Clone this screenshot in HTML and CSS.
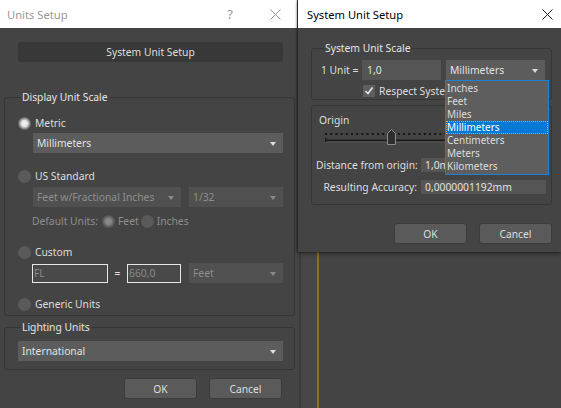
FILE: index.html
```html
<!DOCTYPE html>
<html lang="en">
  <head>
    <meta charset="UTF-8" />
    <meta name="viewport" content="width=device-width, initial-scale=1.0" />
    <title>Units Setup</title>
    <link rel="stylesheet" href="styles.css">
  </head>

  <body>
    <div class="escritorio">
      <div class="viewport">
        <div class="vp-borde"></div>
        <div class="vp-linea"></div>
      </div>

      <!-- Units Setup (ventana de atras) -->
      <section class="ventana ventana-units">
        <header class="barra inactiva">
          <span class="titulo">Units Setup</span>
          <span class="ayuda">?</span>
          <svg class="cerrar" width="11" height="11" viewBox="0 0 11 11"><path d="M0.5 0.5 L10.5 10.5 M10.5 0.5 L0.5 10.5" /></svg>
        </header>
        <div class="cuerpo cuerpo-units">
          <button class="boton-oscuro">System Unit Setup</button>

          <fieldset class="grupo grupo-display">
            <legend>Display Unit Scale</legend>
            <div class="fila-radio fila-metric"><span class="radio marcado"></span>Metric</div>
            <div class="combo sangria">Millimeters<span class="flecha"></span></div>

            <div class="fila-radio fila-us"><span class="radio"></span>US Standard</div>
            <div class="sangria fila-combos">
              <div class="combo off combo-feet">Feet w/Fractional Inches<span class="flecha"></span></div>
              <div class="combo off combo-frac">1/32<span class="flecha"></span></div>
            </div>
            <div class="fila-default">
              <span class="txt-default">Default Units:</span>
              <span class="radio mini-marcado"></span><span class="txt-off">Feet</span>
              <span class="radio radio-inches"></span><span class="txt-off">Inches</span>
            </div>

            <div class="fila-radio fila-custom"><span class="radio"></span>Custom</div>
            <div class="sangria fila-custom-campos">
              <div class="campo-blanco campo-fl">FL</div>
              <span class="igual">=</span>
              <div class="campo-blanco campo-num">660,0</div>
              <div class="combo off combo-pies">Feet<span class="flecha"></span></div>
            </div>

            <div class="fila-radio fila-generic"><span class="radio"></span>Generic Units</div>
          </fieldset>

          <fieldset class="grupo grupo-lighting">
            <legend>Lighting Units</legend>
            <div class="combo combo-intl">International<span class="flecha"></span></div>
          </fieldset>

          <div class="botones">
            <button class="boton">OK</button>
            <button class="boton">Cancel</button>
          </div>
        </div>
      </section>

      <!-- System Unit Setup (ventana activa) -->
      <section class="ventana ventana-system">
        <header class="barra">
          <span class="titulo">System Unit Setup</span>
          <svg class="cerrar" width="11" height="11" viewBox="0 0 11 11"><path d="M0.5 0.5 L10.5 10.5 M10.5 0.5 L0.5 10.5" /></svg>
        </header>
        <div class="cuerpo cuerpo-system">
          <fieldset class="grupo grupo-escala">
            <legend>System Unit Scale</legend>
            <div class="fila-unidad">
              <span class="etiqueta-unidad">1 Unit =</span>
              <div class="campo campo-valor">1,0</div>
              <div class="combo combo-mm">Millimeters<span class="flecha"></span></div>
            </div>
            <div class="fila-check">
              <span class="check">
                <svg width="12" height="12" viewBox="0 0 12 12"><path d="M2.5 6 L5 8.5 L9.5 2.5" /></svg>
              </span>
              <span class="txt-check">Respect System Units in Files</span>
            </div>
          </fieldset>

          <div class="caja-origen">
            <div class="etiqueta-origen">Origin</div>
            <svg class="deslizador" width="222" height="18" viewBox="0 0 222 18">
              <line class="puntos" x1="0" y1="5" x2="222" y2="5" />
              <line class="pista" x1="0" y1="11.5" x2="222" y2="11.5" />
              <line class="pista-luz" x1="0" y1="13" x2="222" y2="13" />
              <line class="pista" x1="0.5" y1="9" x2="0.5" y2="13" />
              <polygon class="pulgar" points="66.5,0.5 70.5,4.5 70.5,15.5 62.5,15.5 62.5,4.5" />
            </svg>
            <div class="fila-dato fila-distancia">
              <span class="etiqueta-dato">Distance from origin:</span>
              <div class="campo campo-dato">1,0mm</div>
            </div>
            <div class="fila-dato fila-precision">
              <span class="etiqueta-dato">Resulting Accuracy:</span>
              <div class="campo campo-dato">0,0000001192mm</div>
            </div>
          </div>

          <div class="botones botones-system">
            <button class="boton">OK</button>
            <button class="boton">Cancel</button>
          </div>

          <!-- lista abierta del combo de unidades, tapa lo de abajo -->
          <ul class="lista">
            <li>Inches</li>
            <li>Feet</li>
            <li>Miles</li>
            <li class="activo">Millimeters</li>
            <li>Centimeters</li>
            <li>Meters</li>
            <li>Kilometers</li>
          </ul>
        </div>
      </section>
    </div>
  </body>
</html>
```

FILE: styles.css
```css
body {
  margin: 0;
  background-color: #444444;
  font-family: "Noto Sans", "Open Sans", sans-serif;
  font-size: 10.3px;
  color: #dedede;
}

.escritorio {
  position: relative;
  width: 561px;
  height: 408px;
  overflow: hidden;
}

/* viewport de fondo */
.viewport {
  position: absolute;
  left: 299px;
  top: 0;
  right: 0;
  bottom: 0;
  background-color: #444444;
  display: flex;
}

.vp-borde {
  width: 16px;
  border-left: 2px solid #3a3a3a;
  background-color: #474747;
}

.vp-linea {
  width: 2px;
  background-color: #8a7128;
}

/* ventanas */
.ventana {
  position: absolute;
  top: 0;
  background-color: #444444;
  display: flex;
  flex-direction: column;
}

.ventana-units {
  left: 0;
  width: 297px;
  height: 408px;
}

.ventana-system {
  left: 298px;
  width: 263px;
  height: 252px;
  box-shadow: -1px 0 2px rgba(0, 0, 0, 0.45), 0 2px 4px rgba(0, 0, 0, 0.35);
}

.barra {
  height: 28px;
  flex-shrink: 0;
  background-color: #ffffff;
  display: flex;
  align-items: center;
  padding-left: 9px;
  font-size: 11.2px;
  color: #000000;
}

.barra .titulo {
  flex: 1;
}

.barra .cerrar {
  margin-right: 8px;
}

.barra .cerrar path {
  stroke: #1a1a1a;
  stroke-width: 1;
  fill: none;
}

.barra.inactiva {
  color: #999999;
  padding-left: 7px;
}

.barra.inactiva .cerrar {
  margin-right: 16px;
}

.barra.inactiva .cerrar path {
  stroke: #999999;
}

.ayuda {
  margin-right: 37px;
  font-size: 13px;
  color: #9a9a9a;
}

.cuerpo {
  flex: 1;
  position: relative;
}

.cuerpo-units {
  padding: 0 2px 0 4px;
}

.cuerpo-system {
  padding: 0 9px 0 13px;
}

/* controles */
button {
  font-family: inherit;
  font-size: 10.3px;
  color: #dedede;
  cursor: pointer;
}

.boton-oscuro {
  display: block;
  width: 265px;
  height: 20px;
  margin: 14px 0 0 14px;
  padding: 0;
  background-color: #383838;
  border: none;
  border-radius: 3px;
}

.boton {
  width: 73px;
  height: 21px;
  padding: 0;
  background-color: #5a5a5a;
  border: 1px solid #3c3c3c;
  border-radius: 3px;
}

.botones {
  display: flex;
  justify-content: flex-end;
  gap: 12px;
  margin: 8px 13px 0 0;
}

.grupo {
  margin: 0;
  padding: 0;
  border: 1px solid #363636;
  border-radius: 3px;
  min-width: 0;
}

.grupo legend {
  margin-left: 3px;
  padding: 0 1px;
  line-height: 16px;
  color: #e4e4e4;
}

.grupo-display {
  margin-top: 27px;
  padding: 0 11px 1px 13px;
}

.grupo-lighting {
  margin-top: 3px;
  padding: 6px 11px 8px 13px;
}

.combo {
  position: relative;
  height: 20px;
  line-height: 20px;
  padding-left: 4px;
  background-color: #5c5c5c;
  color: #e2e2e2;
  white-space: nowrap;
  overflow: hidden;
}

.combo .flecha {
  position: absolute;
  right: 7px;
  top: 9px;
  border-left: 3px solid transparent;
  border-right: 3px solid transparent;
  border-top: 4px solid #dcdcdc;
}

.combo.off {
  background-color: #505050;
  color: #8e8e8e;
}

.combo.off .flecha {
  border-top-color: #8a8a8a;
}

.sangria {
  margin-left: 15px;
}

.fila-radio {
  display: flex;
  align-items: center;
  gap: 4px;
  height: 20px;
}

.radio {
  display: inline-block;
  width: 13px;
  height: 13px;
  border-radius: 50%;
  background-color: #5a5a5a;
  flex-shrink: 0;
}

.radio.marcado {
  background: radial-gradient(circle, #f4f4f4 0, #e6e6e6 3px, #a8a8a8 4.5px, #6c6c6c 6px);
}

.radio.mini-marcado {
  background: radial-gradient(circle, #8e8e8e 0, #838383 3px, #6a6a6a 4.5px, #555555 6px);
}

.fila-metric {
  margin-top: 8px;
}

.fila-us {
  margin-top: 13px;
}

.fila-combos {
  display: flex;
  gap: 8px;
  margin-top: 1px;
}

.combo-feet {
  width: 144px;
}

.combo-frac {
  flex: 1;
}

.fila-default {
  display: flex;
  align-items: center;
  height: 20px;
  margin: 4px 0 0 14px;
  color: #8e8e8e;
  white-space: nowrap;
}

.txt-default {
  width: 70px;
}

.txt-off {
  margin-left: 3px;
}

.radio-inches {
  margin-left: 2px;
}

.fila-custom {
  margin-top: 11px;
}

.fila-custom-campos {
  display: flex;
  align-items: center;
  margin-top: 1px;
  margin-left: 14px;
}

.campo-blanco {
  height: 17px;
  line-height: 17px;
  border: 1px solid #e6e6e6;
  background-color: #494949;
  color: #8a8a8a;
  padding-left: 1px;
}

.campo-fl {
  width: 73px;
}

.campo-num {
  width: 51px;
}

.igual {
  width: 19px;
  text-align: center;
  color: #e2e2e2;
}

.combo-pies {
  flex: 1;
  margin-left: 8px;
}

.fila-generic {
  margin-top: 11px;
}

/* System Unit Setup */
.grupo-escala {
  margin-top: 12px;
  padding: 0 0 0 9px;
}

.fila-unidad {
  display: flex;
  align-items: center;
  margin-top: 4px;
  height: 20px;
}

.etiqueta-unidad {
  width: 41px;
  white-space: nowrap;
}

.campo {
  background-color: #555555;
  color: #e2e2e2;
  padding-left: 5px;
}

.campo-valor {
  width: 74px;
  height: 20px;
  line-height: 20px;
}

.combo-mm {
  width: 95px;
  margin-left: 5px;
}

.fila-check {
  display: flex;
  align-items: center;
  gap: 4px;
  height: 14px;
  margin: 4px 0 1px 42px;
  white-space: nowrap;
}

.check {
  display: inline-block;
  width: 12px;
  height: 12px;
  background-color: #5e5e5e;
  flex-shrink: 0;
}

.check path {
  stroke: #e4e4e4;
  stroke-width: 1.6;
  fill: none;
}

.caja-origen {
  margin-top: 5px;
  height: 98px;
  border: 1px solid #363636;
  border-radius: 3px;
  padding-left: 4px;
}

.etiqueta-origen {
  margin: 6px 0 0 3px;
  line-height: 16px;
}

.deslizador {
  display: block;
  margin: 1px 0 0 9px;
}

.deslizador .puntos {
  stroke: #161616;
  stroke-width: 2;
  stroke-dasharray: 2 3.2;
}

.deslizador .pista {
  stroke: #1c1c1c;
  stroke-width: 2;
}

.deslizador .pista-luz {
  stroke: #5a5a5a;
  stroke-width: 1;
}

.deslizador .pulgar {
  fill: #2e2e2e;
  stroke: #8c8c8c;
  stroke-width: 1;
}

.fila-dato {
  display: flex;
  align-items: center;
  height: 14px;
}

.etiqueta-dato {
  width: 101px;
  text-align: right;
  white-space: nowrap;
}

.fila-distancia {
  margin-top: 11px;
}

.fila-precision {
  margin-top: 8px;
}

.campo-dato {
  width: 121px;
  height: 14px;
  line-height: 14px;
  margin-left: 4px;
  padding-left: 4px;
  white-space: nowrap;
}

.botones-system {
  margin: 18px 0 0 0;
}

/* lista desplegada */
.lista {
  position: absolute;
  left: 147px;
  top: 52px;
  width: 102px;
  margin: 0;
  padding: 1px 0;
  list-style: none;
  background-color: #5e5e5e;
  border: 1px solid #1d7fd6;
}

.lista li {
  height: 13px;
  line-height: 13px;
  padding-left: 1px;
  font-size: 10px;
  color: #dcdcdc;
}

.lista li.activo {
  background-color: #0078d7;
  color: #ffffff;
  outline: 1px dotted #f0a030;
  outline-offset: -1px;
}
```
